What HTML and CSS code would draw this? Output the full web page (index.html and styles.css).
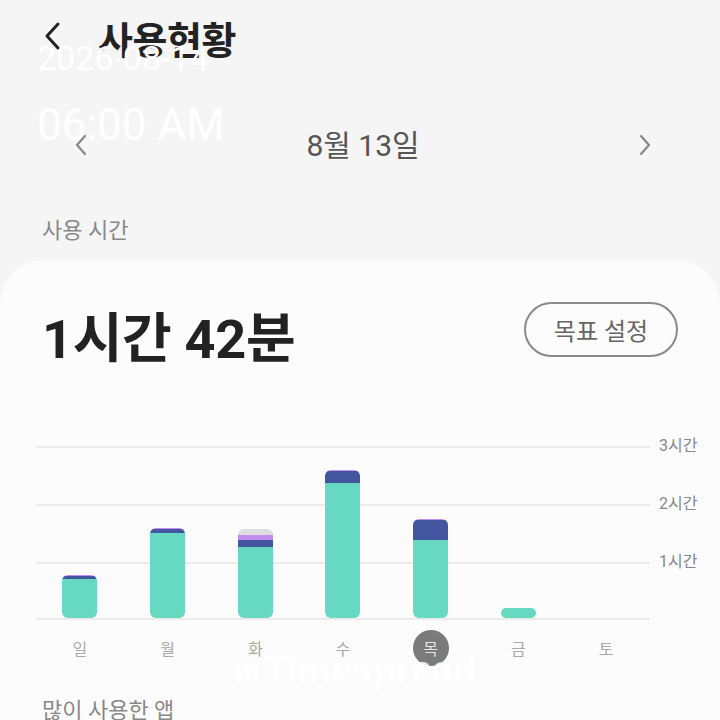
FILE: index.html
```html
<!DOCTYPE html>
<html lang="ko">
<head>
<meta charset="utf-8">
<link rel="stylesheet" href="styles.css">
</head>
<body>
<div class="screen">
  <header class="appbar">
    <svg class="back" width="20" height="30" viewBox="0 0 20 30"><path d="M16 3 L5 15 L16 27" fill="none" stroke="#222" stroke-width="3" stroke-linecap="round" stroke-linejoin="round"/></svg>
    <h1 class="title">사용현황</h1>
  </header>

  <div class="datenav">
    <svg class="chev" width="14" height="24" viewBox="0 0 14 24"><path d="M11 3 L3 12 L11 21" fill="none" stroke="#888" stroke-width="2.2" stroke-linecap="round" stroke-linejoin="round"/></svg>
    <span class="date">8월 13일</span>
    <svg class="chev" width="14" height="24" viewBox="0 0 14 24"><path d="M3 3 L11 12 L3 21" fill="none" stroke="#888" stroke-width="2.2" stroke-linecap="round" stroke-linejoin="round"/></svg>
  </div>

  <div class="section-label">사용 시간</div>

  <main class="card">
    <div class="summary">
      <div class="total">1시간 42분</div>
      <button class="goal">목표 설정</button>
    </div>

    <div class="chart">
      <div class="plot">
        <div class="col"><div class="bar" style="height:43px"><i class="s-purple" style="height:1px"></i><i class="s-blue" style="height:3px"></i><i class="s-green"></i></div></div>
        <div class="col"><div class="bar" style="height:90px"><i class="s-purple" style="height:1px"></i><i class="s-blue" style="height:4px"></i><i class="s-green"></i></div></div>
        <div class="col"><div class="bar" style="height:89px"><i class="s-gray" style="height:6px"></i><i class="s-purple" style="height:5px"></i><i class="s-blue" style="height:7px"></i><i class="s-green"></i></div></div>
        <div class="col"><div class="bar" style="height:148px"><i class="s-purple" style="height:1px"></i><i class="s-blue" style="height:12px"></i><i class="s-green"></i></div></div>
        <div class="col"><div class="bar" style="height:99px"><i class="s-purple" style="height:1px"></i><i class="s-blue" style="height:20px"></i><i class="s-green"></i></div></div>
        <div class="col"><div class="bar" style="height:10px"><i class="s-green"></i></div></div>
        <div class="col"></div>
      </div>
      <div class="yaxis">
        <span>3시간</span>
        <span>2시간</span>
        <span>1시간</span>
      </div>
      <div class="days">
        <span class="day">일</span>
        <span class="day">월</span>
        <span class="day">화</span>
        <span class="day">수</span>
        <span class="day current">목</span>
        <span class="day">금</span>
        <span class="day">토</span>
      </div>
    </div>

    <div class="section-label in-card">많이 사용한 앱</div>
  </main>

  <div class="stamp">
    <div class="stamp-date">2026-08-14</div>
    <div class="stamp-time">06:00 AM</div>
  </div>

  <div class="watermark">
    <svg width="24" height="26" viewBox="0 0 24 26"><rect x="0" y="8" width="6" height="18" fill="#fff"/><rect x="8" y="4" width="6" height="22" fill="#fff"/><rect x="16" y="10" width="6" height="16" fill="#fff"/><rect x="0" y="0" width="6" height="5" fill="#fff"/></svg>
    <span>Timespread</span>
  </div>
</div>
</body>
</html>
```

FILE: styles.css
```css
* { box-sizing: border-box; margin: 0; padding: 0; }

html, body {
  width: 720px;
  height: 720px;
  overflow: hidden;
}

body {
  background: #f5f5f5;
  font-family: "Roboto", "Noto Sans CJK KR", sans-serif;
  color: #222;
}

.screen {
  position: relative;
  width: 720px;
  height: 720px;
}

.appbar {
  height: 72px;
  display: flex;
  align-items: center;
  padding-left: 42px;
}

.back { margin-right: 36px; }

.title {
  font-size: 38px;
  font-weight: 700;
  color: #222;
  letter-spacing: -0.5px;
  margin-top: 2px;
}

.datenav {
  margin-top: 36px;
  height: 70px;
  display: flex;
  align-items: center;
  justify-content: space-between;
  padding: 0 68px 0 74px;
}

.chev { margin-top: 4px; }

.date {
  font-size: 30px;
  color: #555;
  font-weight: 400;
}

.section-label {
  margin-top: 38px;
  padding-left: 42px;
  font-size: 22px;
  color: #888;
  height: 30px;
  line-height: 30px;
}

.card {
  margin-top: 14px;
  background: #fcfcfc;
  border-radius: 44px 44px 0 0;
  padding: 42px 0 0 0;
  height: 460px;
}

.summary {
  display: flex;
  justify-content: space-between;
  align-items: flex-start;
  padding: 0 42px 0 42px;
  height: 68px;
}

.total {
  margin-top: 6px;
  font-size: 54px;
  font-weight: 700;
  line-height: 64px;
  color: #222;
  letter-spacing: -0.3px;
}

.goal {
  width: 154px;
  height: 55px;
  border: 2px solid #8a8a8a;
  border-radius: 28px;
  background: transparent;
  font-family: inherit;
  font-size: 24px;
  color: #666;
}

.chart {
  margin-top: 76px;
  padding-left: 36px;
  display: grid;
  grid-template-columns: 614px 1fr;
  grid-template-rows: 174px auto;
}

.plot {
  display: grid;
  grid-template-columns: repeat(7, 1fr);
  align-items: end;
  background: repeating-linear-gradient(to bottom, #ebebeb 0 2px, transparent 2px 58px);
  border-bottom: 2px solid #ebebeb;
}

.col {
  display: flex;
  justify-content: center;
  align-items: flex-end;
  height: 100%;
}

.bar {
  width: 35px;
  border-radius: 6px;
  overflow: hidden;
  display: flex;
  flex-direction: column;
}

.bar i { display: block; flex: none; }
.bar .s-green { flex: 1; background: #67d8c2; }
.s-blue { background: #4456a0; }
.s-purple { background: #c48cf0; }
.s-gray { background: #dedede; }

.yaxis {
  display: flex;
  flex-direction: column;
  gap: 34px;
  margin-top: -12px;
  padding-left: 9px;
  font-size: 16px;
  line-height: 24px;
  color: #888;
}

.days {
  grid-column: 1;
  display: grid;
  grid-template-columns: repeat(7, 1fr);
  margin-top: 10px;
}

.day {
  justify-self: center;
  width: 36px;
  height: 36px;
  display: flex;
  align-items: center;
  justify-content: center;
  font-size: 16px;
  color: #aaa;
}

.day.current {
  background: #7b7b7b;
  border-radius: 50%;
  color: #e4e4e4;
}

.section-label.in-card {
  margin-top: 30px;
}

.stamp {
  position: absolute;
  left: 37px;
  top: 39px;
  color: #fff;
  font-family: "Roboto", sans-serif;
}

.stamp-date {
  font-size: 34px;
  line-height: 38px;
}

.stamp-time {
  margin-top: 22px;
  font-size: 44px;
  line-height: 52px;
}

.watermark {
  position: absolute;
  left: 236px;
  top: 650px;
  display: flex;
  align-items: center;
  gap: 4px;
  color: #fff;
  opacity: 0.85;
  font-family: "Liberation Sans", sans-serif;
  font-weight: 700;
  font-size: 38px;
  line-height: 40px;
}
```
